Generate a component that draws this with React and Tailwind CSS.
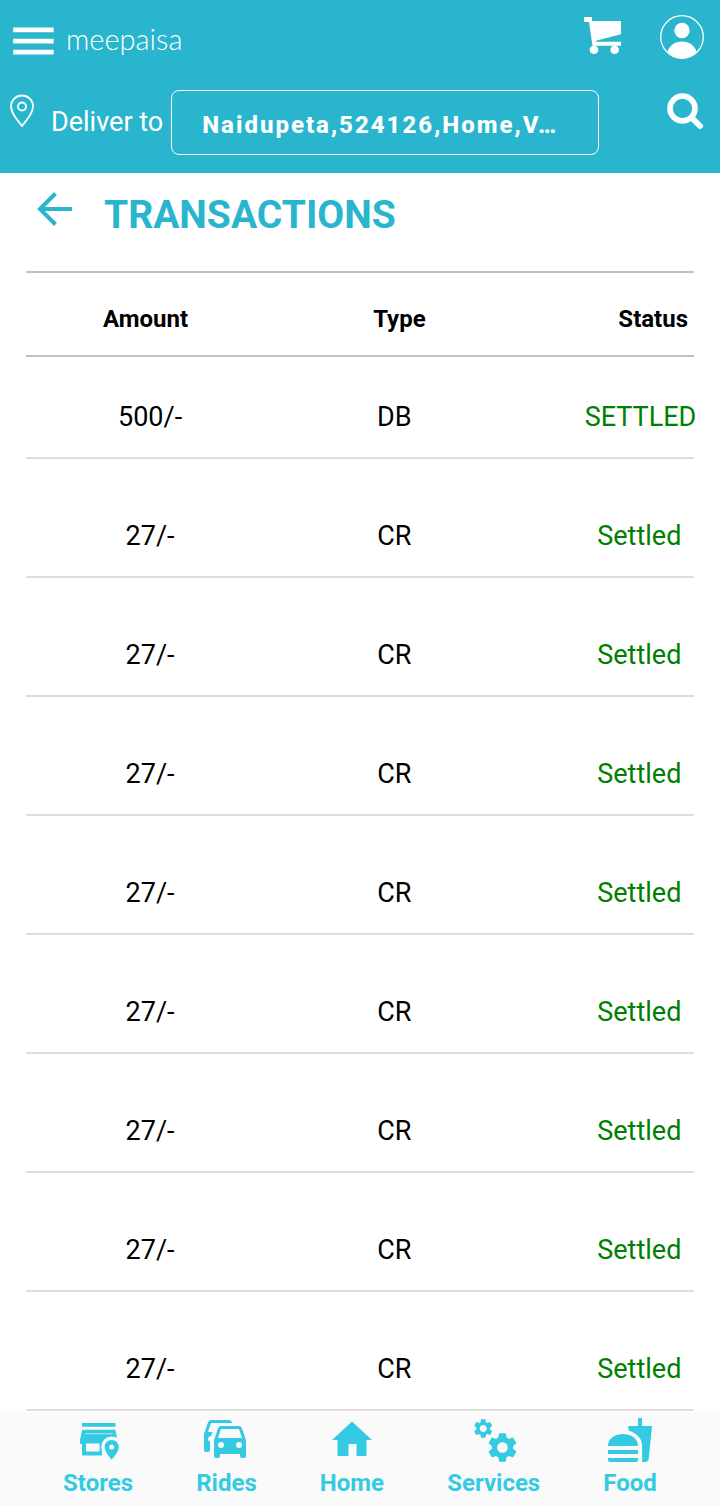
import React from 'react';
import { MdFastfood } from 'react-icons/md';

const TRANSACTIONS = [
  { id: 1, amount: 500, type: 'DB', status: 'SETTLED' },
  { id: 2, amount: 27, type: 'CR', status: 'Settled' },
  { id: 3, amount: 27, type: 'CR', status: 'Settled' },
  { id: 4, amount: 27, type: 'CR', status: 'Settled' },
  { id: 5, amount: 27, type: 'CR', status: 'Settled' },
  { id: 6, amount: 27, type: 'CR', status: 'Settled' },
  { id: 7, amount: 27, type: 'CR', status: 'Settled' },
  { id: 8, amount: 27, type: 'CR', status: 'Settled' },
  { id: 9, amount: 27, type: 'CR', status: 'Settled' },
];

const COG =
  'M19.14 12.94c.04-.3.06-.61.06-.94 0-.32-.02-.64-.07-.94l2.03-1.58c.18-.14.23-.41.12-.61l-1.92-3.32c-.12-.22-.37-.29-.59-.22l-2.39.96c-.5-.38-1.03-.7-1.62-.94l-.36-2.54c-.04-.24-.24-.41-.48-.41h-3.84c-.24 0-.43.17-.47.41l-.36 2.54c-.59.24-1.13.57-1.62.94l-2.39-.96c-.22-.08-.47 0-.59.22L2.74 8.87c-.12.21-.08.47.12.61l2.03 1.58c-.05.3-.09.63-.09.94s.02.64.07.94l-2.03 1.58c-.18.14-.23.41-.12.61l1.92 3.32c.12.22.37.29.59.22l2.39-.96c.5.38 1.03.7 1.62.94l.36 2.54c.05.24.24.41.48.41h3.84c.24 0 .44-.17.47-.41l.36-2.54c.59-.24 1.13-.56 1.62-.94l2.39.96c.22.08.47 0 .59-.22l1.92-3.32c.12-.22.07-.47-.12-.61l-2.01-1.58zM12 15.6c-1.98 0-3.6-1.62-3.6-3.6s1.62-3.6 3.6-3.6 3.6 1.62 3.6 3.6-1.62 3.6-3.6 3.6z';

function StoresIcon() {
  return (
    <svg viewBox="0 0 48 48" className="size-12" fill="currentColor" aria-hidden="true">
      <path d="M8 7h33.500v3.800H8z" />
      <path
        fillRule="evenodd"
        d="M8.300 13.700h33l2 10V28H28v11.500H8V28H6v-4.300zM12 27.500v8h13.500v-8z"
      />
      <path d="M11 17.700h27.500" stroke="#fafafa" strokeOpacity="0.700" strokeWidth="0.900" />
      <circle cx="37.700" cy="31" r="10.500" fill="#fafafa" />
      <path
        fillRule="evenodd"
        d="M37.700 24c-4 0-7.100 3.200-7.100 7.100 0 5.200 7.100 12.500 7.100 12.500s7.100-7.300 7.100-12.500c0-3.900-3.100-7.100-7.100-7.100zm0 9.600a2.500 2.500 0 1 1 0-5 2.500 2.500 0 0 1 0 5z"
      />
    </svg>
  );
}

function RidesIcon() {
  return (
    <svg viewBox="0 0 24 24" className="size-12" fill="currentColor" aria-hidden="true">
      <path d="M8 11L9.500 6.500H18.500L20 11M18.500 16A1.500 1.500 0 0 1 17 14.500 1.500 1.500 0 0 1 18.500 13 1.500 1.500 0 0 1 20 14.500 1.500 1.500 0 0 1 18.500 16M9.500 16A1.500 1.500 0 0 1 8 14.500 1.500 1.500 0 0 1 9.500 13 1.500 1.500 0 0 1 11 14.500 1.500 1.500 0 0 1 9.500 16M19.920 6C19.710 5.400 19.140 5 18.500 5H9.500C8.860 5 8.290 5.400 8.080 6L6 12V20A1 1 0 0 0 7 21H8A1 1 0 0 0 9 20V19H19V20A1 1 0 0 0 20 21H21A1 1 0 0 0 22 20V12L19.920 6M14.920 3C14.710 2.400 14.140 2 13.500 2H4.500C3.860 2 3.290 2.400 3.080 3L1 9V17A1 1 0 0 0 2 18H3A1 1 0 0 0 4 17V12.910C3.220 12.630 2.820 11.770 3.100 11C3.320 10.400 3.870 10 4.500 10H4.570L5.270 8H3L4.500 3.500H15.090L14.920 3Z" />
    </svg>
  );
}

function HomeIcon() {
  return (
    <svg viewBox="0 0 48 48" className="size-12" fill="currentColor" aria-hidden="true">
      <path d="M24 5.500L44 24h-5.500v16H28.500V28h-8v12H9.500V24H4z" />
    </svg>
  );
}

function ServicesIcon() {
  return (
    <svg viewBox="0 0 48 48" className="size-12" fill="currentColor" aria-hidden="true">
      <path d={COG} transform="translate(1.700 1) scale(0.960)" />
      <path d={COG} transform="translate(14.700 13.700) scale(1.480)" />
    </svg>
  );
}

function FoodIcon() {
  return <MdFastfood className="size-12" aria-hidden="true" />;
}

const TABS = [
  { label: 'Stores', icon: StoresIcon },
  { label: 'Rides', icon: RidesIcon },
  { label: 'Home', icon: HomeIcon },
  { label: 'Services', icon: ServicesIcon },
  { label: 'Food', icon: FoodIcon },
];

function Header() {
  return (
    <header className="bg-[#29b5cd] text-white px-4 pt-[15px] pb-[18px]">
      <div className="flex items-center justify-between h-11">
        <div className="flex items-center gap-3 pt-2 -ml-1">
          <button type="button" aria-label="Menu">
            <svg viewBox="0 0 42 28" className="w-[42px] h-7" fill="currentColor">
              <path d="M1.200 .5h40.500v4.800H1.200zM1.200 11.800h40.500v4.800H1.200zM1.200 22.700h40.500v4.800H1.200z" />
            </svg>
          </button>
          <span className="font-[Lato] font-light text-[29px] leading-8 -mt-1">meepaisa</span>
        </div>
        <div className="flex items-center gap-[37px]">
          <button type="button" aria-label="Cart">
            <svg viewBox="0 0 40 40" className="size-10" fill="currentColor">
              <path d="M1 0h8v4h29v13.200L13 23.800v1h25v4H9.500L6 5H1z" />
              <circle cx="11" cy="32.800" r="4.300" />
              <circle cx="31.700" cy="32.800" r="4.300" />
            </svg>
          </button>
          <button type="button" aria-label="Profile">
            <svg viewBox="0 0 44 44" className="size-11" fill="currentColor">
              <circle cx="22" cy="22" r="21.300" fill="none" stroke="currentColor" strokeWidth="1.300" />
              <circle cx="22" cy="15.500" r="7.700" />
              <path d="M7.500 36.500C9.500 30.500 15 26.500 22 26.500s12.500 4 14.500 10C33 41 28 43.500 22 43.500S11 41 7.500 36.500z" />
            </svg>
          </button>
        </div>
      </div>

      {/* Delivery address */}
      <div className="flex items-start mt-[31px]">
        <svg viewBox="0 0 26 34" className="w-[26px] h-[34px] mt-1 -ml-2 shrink-0" fill="none" stroke="currentColor" strokeWidth="1.800">
          <path d="M14 32C8 24.500 3 18.500 3 12.500a11 11 0 0 1 22 0C25 18.500 20 24.500 14 32z" />
          <circle cx="14" cy="12.500" r="4" />
        </svg>
        <label htmlFor="address" className="text-[27px] leading-8 pt-4 ml-[17px] whitespace-nowrap">Deliver to</label>
        <button
          id="address"
          type="button"
          className="flex-1 min-w-0 h-[65px] ml-2 mr-[67px] px-[30px] pt-1 border border-white rounded-lg text-left text-2xl font-extrabold tracking-[2px] truncate"
        >
          Naidupeta,524126,Home,V…
        </button>
        <button type="button" aria-label="Search" className="mt-[2px]">
          <svg viewBox="0 0 38 38" className="size-[38px]" fill="none" stroke="currentColor">
            <circle cx="16.500" cy="16.500" r="12.500" strokeWidth="5.600" />
            <path d="M26 26l8 8" strokeWidth="6" strokeLinecap="round" />
          </svg>
        </button>
      </div>
    </header>
  );
}

export default function App() {
  return (
    <div className="min-h-screen flex flex-col bg-white text-black font-[Roboto,sans-serif]">
      <Header />

      <main className="flex-1 px-[26px]">
        <div className="flex items-start gap-8 pt-[18px] pb-7 pl-[11px]">
          <button type="button" aria-label="Back" className="text-[#29b5cd]">
            <svg viewBox="0 0 35 36" className="w-[35px] h-9" fill="none" stroke="currentColor" strokeWidth="4">
              <path d="M18.500 2.500L3 18l15.500 15.500M3 18h33" />
            </svg>
          </button>
          <h1 className="text-[39px] leading-[48px] font-bold text-[#29b5cd]">TRANSACTIONS</h1>
        </div>

        <table className="w-full table-fixed border-separate border-spacing-0 border-t-2 border-[#bdc1c6] mt-1">
          <thead>
            <tr className="text-2xl leading-8">
              <th className="w-[37%] pt-[30px] pb-5 pr-2 font-bold border-b-2 border-[#bdc1c6]">Amount</th>
              <th className="w-[36%] pt-[30px] pb-5 pl-3 font-bold border-b-2 border-[#bdc1c6]">Type</th>
              <th className="w-[27%] pt-[30px] pb-5 pr-1.5 font-bold text-right border-b-2 border-[#bdc1c6]">Status</th>
            </tr>
          </thead>
          <tbody>
            {TRANSACTIONS.map((t, i) => {
              const cell = `${i === 0 ? 'pt-11' : 'pt-[61px]'} pb-6 border-b-2 border-[#dddddd] text-center whitespace-nowrap`;
              return (
                <tr key={t.id} className="text-[27px] leading-8">
                  <td className={`${cell} pl-px`}>{t.amount}/-</td>
                  <td className={`${cell} pl-0.5`}>{t.type}</td>
                  <td className={`${cell} pl-[71px] text-[#008000]`}>{t.status}</td>
                </tr>
              );
            })}
          </tbody>
        </table>
      </main>

      <nav className="sticky bottom-0 mt-px flex justify-evenly bg-[#fafafa] pt-1 pb-[7px] text-[#34cbe2]">
        {TABS.map(({ label, icon: Icon }) => (
          <a key={label} href={`#${label.toLowerCase()}`} className="flex flex-col items-center gap-[3px]">
            <Icon />
            <span className="text-2xl leading-8 font-bold">{label}</span>
          </a>
        ))}
      </nav>
    </div>
  );
}
